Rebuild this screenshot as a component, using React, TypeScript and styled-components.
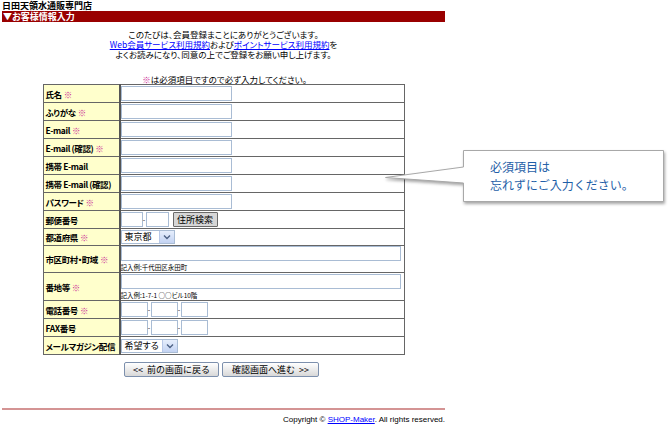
import React from 'react';
import styled, { createGlobalStyle } from 'styled-components';

const GlobalStyle = createGlobalStyle`
  body {
    margin: 0;
    background: #fff;
    color: #000;
    font-family: "Noto Sans CJK JP", "Liberation Sans", sans-serif;
    font-size: 9px;
    font-feature-settings: "palt";
  }
`;

const Page = styled.div`
  position: relative;
  width: 670px;
  height: 426px;
  overflow: hidden;
`;

const Main = styled.div`
  width: 443px;
  margin-left: 2px;
`;

const ShopTitle = styled.div`
  height: 11px;
  line-height: 11px;
  font-weight: bold;
  font-size: 9px;
`;

const SectionBar = styled.div`
  height: 11px;
  line-height: 11px;
  background: #990000;
  color: #fff;
  font-weight: bold;
  padding-left: 1px;
`;

const Intro = styled.div`
  margin-top: 7px;
  text-align: center;
  font-size: 8.5px;
  line-height: 10px;
`;

const Link = styled.a`
  color: #0000ff;
  text-decoration: underline;
`;

const Note = styled.div`
  margin-top: 16px;
  text-align: center;
  font-size: 8.5px;
  line-height: 9px;
`;

const Req = styled.span`
  color: #cc3399;
  margin-left: 2px;
`;

const FormTable = styled.table`
  width: 362px;
  margin: 0 auto;
  border-collapse: collapse;
  table-layout: fixed;
  border: 1px solid #555;
`;

const LabelCell = styled.td<{ $h: number }>`
  width: 72px;
  height: ${p => p.$h}px;
  padding: 0 1px 0 2px;
  background: #ffffcc;
  border: 1px solid #666;
  border-right: 2px solid #555;
  font-weight: bold;
  font-size: 8.5px;
  letter-spacing: -0.4px;
  white-space: nowrap;
  overflow: hidden;
  vertical-align: middle;
`;

const ValueCell = styled.td`
  padding: 0 1px 0 0;
  border: 1px solid #666;
  vertical-align: middle;
`;

const TextInput = styled.input<{ $w: number }>`
  box-sizing: border-box;
  width: ${p => p.$w}px;
  height: 15px;
  margin: 0;
  padding: 0 2px;
  border: 1px solid #a9bcd4;
  background: #fff;
  font-size: 9px;
  vertical-align: middle;
  display: inline-block;
`;

const Inline = styled.div`
  display: flex;
  align-items: center;
`;

const Dash = styled.span`
  width: 3px;
  text-align: center;
  font-size: 7px;
  line-height: 15px;
`;

const ZipButton = styled.button`
  box-sizing: border-box;
  height: 15px;
  width: 45px;
  margin-left: 4px;
  padding: 0;
  background: #d6d6d6;
  border: 1px solid #6a6a6a;
  border-radius: 1px;
  font-family: inherit;
  font-size: 9px;
  line-height: 13px;
  color: #000;
`;

const Example = styled.div`
  font-size: 6.5px;
  line-height: 9px;
  margin-top: 2px;
`;

const SelectWrap = styled.div<{ $w: number }>`
  box-sizing: border-box;
  width: ${p => p.$w}px;
  height: 14px;
  display: flex;
  align-items: center;
  border: 1px solid #a9bcd4;
  background: #fff;
`;

const SelectText = styled.span`
  flex: 1;
  padding-left: 3px;
  font-size: 9px;
  line-height: 12px;
`;

const SelectArrow = styled.span`
  width: 14px;
  height: 12px;
  display: flex;
  align-items: center;
  justify-content: center;
  background: linear-gradient(#e6eefc, #c3d3f3);
  border-left: 1px solid #b8c8e8;
`;

const ButtonRow = styled.div`
  margin-top: 7px;
  display: flex;
  justify-content: center;
  gap: 3px;
  padding-right: 4px;
`;

const NavButton = styled.button<{ $w: number }>`
  box-sizing: border-box;
  width: ${p => p.$w}px;
  height: 15px;
  padding: 0;
  background: linear-gradient(#ffffff, #e8e8e8 60%, #d8d8d8);
  border: 1px solid #7d90ad;
  border-radius: 2px;
  font-family: inherit;
  font-size: 9px;
  line-height: 13px;
  color: #000;
  white-space: pre;
`;

const FooterLine = styled.div`
  margin-top: 31px;
  height: 2px;
  background: #d49494;
`;

const Copyright = styled.div`
  margin-top: 5px;
  text-align: right;
  font-family: "Liberation Sans", Arial, sans-serif;
  font-size: 8px;
  line-height: 10px;
`;

const Callout = styled.div`
  position: absolute;
  left: 385px;
  top: 150px;
  width: 281px;
  height: 54px;
`;

const CalloutShape = styled.svg`
  position: absolute;
  inset: 0;
  filter: drop-shadow(1px 2px 1.5px rgba(0, 0, 0, 0.35));
`;

const CalloutText = styled.div`
  position: relative;
  padding: 8px 0 0 105px;
  color: #1f5fa8;
  font-size: 12px;
  line-height: 18px;
  font-feature-settings: normal;
`;

const Arrow = () => (
  <svg width="8" height="6" viewBox="0 0 8 6">
    <path d="M1 1.5 L4 4.5 L7 1.5" fill="none" stroke="#4d6185" strokeWidth="1.4" />
  </svg>
);

type Row = {
  label: string;
  req?: boolean;
  h?: number;
  kind: 'text' | 'zip' | 'pref' | 'wide' | 'tel' | 'mag';
  example?: string;
};

const rows: Row[] = [
  { label: '氏名', req: true, kind: 'text' },
  { label: 'ふりがな', req: true, kind: 'text' },
  { label: 'E-mail', req: true, kind: 'text' },
  { label: 'E-mail (確認)', req: true, kind: 'text' },
  { label: '携帯 E-mail', kind: 'text' },
  { label: '携帯 E-mail (確認)', kind: 'text' },
  { label: 'パスワード', req: true, kind: 'text' },
  { label: '郵便番号', kind: 'zip' },
  { label: '都道府県', req: true, kind: 'pref', h: 16 },
  { label: '市区町村・町域', req: true, kind: 'wide', h: 26, example: '記入例:千代田区永田町' },
  { label: '番地等', req: true, kind: 'wide', h: 27, example: '記入例:1-7-1 ○○ビル10階' },
  { label: '電話番号', req: true, kind: 'tel' },
  { label: 'FAX番号', kind: 'tel' },
  { label: 'メールマガジン配信', kind: 'mag' },
];

const renderField = (row: Row) => {
  switch (row.kind) {
    case 'text':
      return <TextInput $w={111} />;
    case 'zip':
      return (
        <Inline>
          <TextInput $w={22} />
          <Dash>-</Dash>
          <TextInput $w={23} />
          <ZipButton>住所検索</ZipButton>
        </Inline>
      );
    case 'pref':
      return (
        <SelectWrap $w={54}>
          <SelectText>東京都</SelectText>
          <SelectArrow><Arrow /></SelectArrow>
        </SelectWrap>
      );
    case 'wide':
      return (
        <div>
          <TextInput $w={280} />
          <Example>{row.example}</Example>
        </div>
      );
    case 'tel':
      return (
        <Inline>
          <TextInput $w={27} />
          <Dash>-</Dash>
          <TextInput $w={27} />
          <Dash>-</Dash>
          <TextInput $w={27} />
        </Inline>
      );
    case 'mag':
      return (
        <SelectWrap $w={57}>
          <SelectText>希望する</SelectText>
          <SelectArrow><Arrow /></SelectArrow>
        </SelectWrap>
      );
  }
};

const App = () => (
  <Page>
    <GlobalStyle />
    <Main>
      <ShopTitle>日田天領水通販専門店</ShopTitle>
      <SectionBar>▼お客様情報入力</SectionBar>
      <Intro>
        このたびは、会員登録まことにありがとうございます。
        <br />
        <Link href="#">Web会員サービス利用規約</Link>および<Link href="#">ポイントサービス利用規約</Link>を
        <br />
        よくお読みになり、同意の上でご登録をお願い申し上げます。
      </Intro>
      <Note>
        <Req>※</Req>は必須項目ですので必ず入力してください。
      </Note>
      <FormTable>
        <tbody>
          {rows.map(row => (
            <tr key={row.label}>
              <LabelCell $h={row.h ?? 17}>
                {row.label}
                {row.req && <Req>※</Req>}
              </LabelCell>
              <ValueCell>{renderField(row)}</ValueCell>
            </tr>
          ))}
        </tbody>
      </FormTable>
      <ButtonRow>
        <NavButton $w={95}>{'<<  前の画面に戻る'}</NavButton>
        <NavButton $w={97}>{'確認画面へ進む  >>'}</NavButton>
      </ButtonRow>
      <FooterLine />
      <Copyright>
        Copyright © <Link href="#">SHOP-Maker</Link>. All rights reserved.
      </Copyright>
    </Main>
    <Callout>
      <CalloutShape width="281" height="54" viewBox="0 0 281 54">
        <path
          d="M78.5 0.5 H278.5 V51.5 H78.5 V33 L0.5 27.5 L78.5 17 Z"
          fill="#fff"
          stroke="#a8a8a8"
          strokeWidth="1"
        />
      </CalloutShape>
      <CalloutText>
        必須項目は
        <br />
        忘れずにご入力ください。
      </CalloutText>
    </Callout>
  </Page>
);

export default App;
